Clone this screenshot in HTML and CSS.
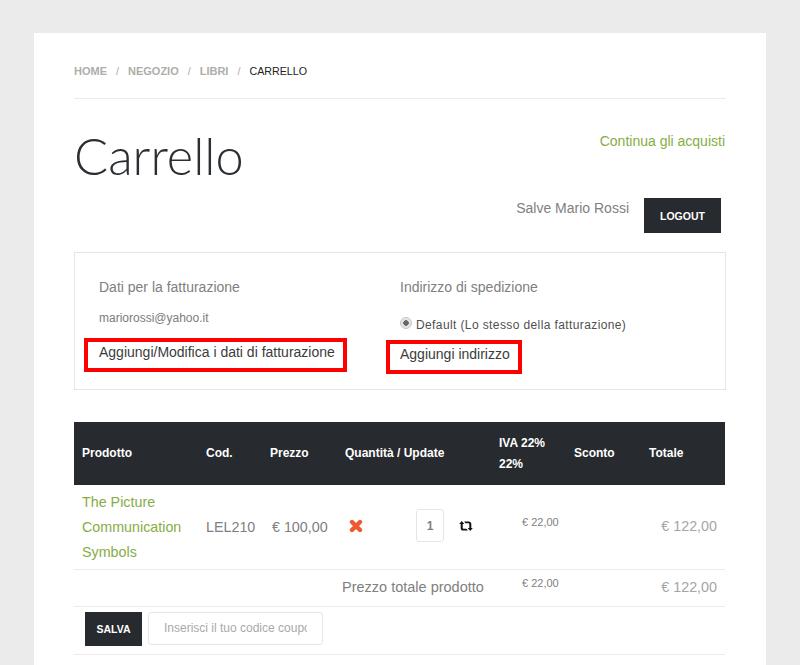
FILE: index.html
```html
<!DOCTYPE html>
<html lang="it">
<head>
<meta charset="utf-8">
<title>Carrello</title>
<link rel="stylesheet" href="styles.css">
</head>
<body>
<main class="card">
  <nav class="crumbs">
    <a>HOME</a><span class="sep">/</span><a>NEGOZIO</a><span class="sep">/</span><a>LIBRI</a><span class="sep">/</span><span class="current">CARRELLO</span>
  </nav>
  <header class="head">
    <h1>Carrello</h1>
    <a class="continue">Continua gli acquisti</a>
  </header>
  <div class="user">
    <span class="hello">Salve Mario Rossi</span>
    <button class="btn logout">LOGOUT</button>
  </div>
  <section class="addresses">
    <div class="col">
      <h2>Dati per la fatturazione</h2>
      <p class="mail">mariorossi@yahoo.it</p>
      <a class="marked wide">Aggiungi/Modifica i dati di fatturazione</a>
    </div>
    <div class="col">
      <h2>Indirizzo di spedizione</h2>
      <label class="radio"><input type="radio" checked> Default (Lo stesso della fatturazione)</label>
      <a class="marked">Aggiungi indirizzo</a>
    </div>
  </section>
  <table class="cart">
    <colgroup>
      <col class="c1"><col class="c2"><col class="c3"><col class="c4"><col class="c5"><col class="c6"><col class="c7">
    </colgroup>
    <thead>
      <tr>
        <th>Prodotto</th><th>Cod.</th><th>Prezzo</th><th>Quantità / Update</th><th>IVA 22%<br>22%</th><th>Sconto</th><th>Totale</th>
      </tr>
    </thead>
    <tbody>
      <tr class="item">
        <td><a class="product">The Picture Communication Symbols</a></td>
        <td class="shift">LEL210</td>
        <td class="shift nowrap price">€ 100,00</td>
        <td>
          <div class="qty">
            <svg class="remove" viewBox="0 0 14 14" width="14" height="14" aria-hidden="true"><path d="M3 3 11 11M11 3 3 11"/></svg>
            <input class="qty-input" type="text" value="1">
            <svg class="update" viewBox="0 0 14 12" width="14" height="12" aria-hidden="true"><path d="M2.8 1 0.2 4H1.7V8C1.7 9.7 2.6 10.6 4.3 10.6H9L7.4 8.7H4.6C4 8.7 3.7 8.4 3.7 7.8V4H5.3ZM5 1.4 6.6 3.3H9.4C10 3.3 10.3 3.6 10.3 4.2V8H8.7L11.2 11 13.8 8H12.3V4C12.3 2.3 11.4 1.4 9.7 1.4Z"/></svg>
          </div>
        </td>
        <td class="tax"><span>€ 22,00</span></td>
        <td></td>
        <td class="total">€ 122,00</td>
      </tr>
      <tr class="sum">
        <td colspan="4" class="sum-label">Prezzo totale prodotto</td>
        <td class="tax"><span>€ 22,00</span></td>
        <td></td>
        <td class="total">€ 122,00</td>
      </tr>
      <tr class="coupon">
        <td colspan="7">
          <div class="coupon-row">
            <button class="btn save">SALVA</button>
            <input class="code" type="text" placeholder="Inserisci il tuo codice coupon">
          </div>
        </td>
      </tr>
    </tbody>
  </table>
</main>
</body>
</html>
```

FILE: styles.css
```css
* { box-sizing: border-box; }
html, body { height: 100%; overflow: hidden; }
body {
  margin: 0;
  padding: 33px 34px 0;
  background: #ebebeb;
  font-family: "Liberation Sans", Arial, sans-serif;
  color: #808080;
}
.card {
  background: #fff;
  padding: 32px 40px 0;
  height: 632px;
  overflow: hidden;
}
.crumbs {
  display: flex;
  align-items: center;
  box-sizing: content-box;
  height: 12px;
  padding-bottom: 21px;
  border-bottom: 1px solid #ebebeb;
  font-size: 10.7px;
  color: #a09f9c;
}
.crumbs a { font-size: 11px; font-weight: 700; opacity: .85; }
.sep { margin: 0 9px; color: #a9a9a9; }
.current { color: #222; }
.head {
  display: flex;
  justify-content: space-between;
  align-items: flex-start;
  padding-top: 24px;
}
h1 {
  margin: 0;
  font-family: "Lato", sans-serif;
  font-weight: 300;
  font-size: 50.5px;
  line-height: 66px;
  color: #2b2e33;
}
.continue {
  margin-top: 9px;
  margin-right: 1px;
  font-size: 14px;
  line-height: 18px;
  color: #86ad45;
}
.user {
  display: flex;
  justify-content: flex-end;
  align-items: flex-start;
  gap: 15px;
  padding-right: 5px;
  margin-top: 9px;
}
.hello { font-size: 14px; line-height: 18px; margin-top: 1px; }
.btn {
  border: 0;
  background: #272a2e;
  color: #fff;
  font-family: "Liberation Sans", Arial, sans-serif;
  font-weight: 700;
  font-size: 10.5px;
}
.logout { width: 77px; height: 35px; }
.addresses {
  display: grid;
  grid-template-columns: 301px 301px;
  height: 138px;
  margin-top: 19px;
  padding: 25px 0 0 24px;
  border: 1px solid #e6e6e6;
}
.col { display: flex; flex-direction: column; align-items: flex-start; }
h2 { margin: 0; font-size: 14px; font-weight: 400; line-height: 18px; color: #808080; }
.mail { margin: 14px 0 0; font-size: 12px; line-height: 16px; height: 28px; color: #7c7c7c; }
.radio {
  display: flex;
  align-items: center;
  gap: 4px;
  margin-top: 18px;
  height: 21px;
  margin-bottom: 5px;
  font-size: 12px;
  letter-spacing: .39px;
  color: #4f4f4f;
}
.radio input {
  appearance: none;
  width: 12px;
  height: 12px;
  margin: 0 0 3px;
  border-radius: 50%;
  border: 1px solid #c4c4c4;
  background: radial-gradient(circle, #666 0 2.5px, #e4e4e4 3px);
}
.marked {
  display: block;
  height: 34px;
  margin-left: -15px;
  padding: 0 8px 0 11px;
  border: 4px solid #f00;
  font-size: 14px;
  line-height: 20px;
  color: #3c3c3c;
  white-space: nowrap;
}
.col + .col .marked { margin-left: -14px; padding-left: 10px; padding-right: 8px; }
.cart {
  width: 651px;
  margin-top: 32px;
  border-collapse: collapse;
  table-layout: fixed;
}
.c1 { width: 124px; } .c2 { width: 64px; } .c3 { width: 75px; } .c4 { width: 154px; }
.c5 { width: 75px; } .c6 { width: 75px; } .c7 { width: 84px; }
.cart th {
  height: 63px;
  padding: 0 8px;
  background: #272a2e;
  color: #fff;
  font-size: 12px;
  font-weight: 700;
  line-height: 21px;
  text-align: left;
}
.cart td {
  padding: 0 8px;
  border-bottom: 1px solid #ebebeb;
  font-size: 14.3px;
  line-height: 25px;
  color: #808080;
}
.item td { height: 84px; }
.product { display: block; padding-top: 2px; color: #86ad45; }
.cart .shift { padding-top: 2px; }
.nowrap { white-space: nowrap; }
.cart .price { padding-left: 10px; }
.qty { display: flex; align-items: center; }
.remove { margin: -2px 53px 0 4px; }
.remove path { fill: none; stroke: #f0592e; stroke-width: 4.4; stroke-linecap: round; }
.qty-input {
  width: 28px;
  height: 33px;
  padding: 0;
  margin: -2px 15px 0 0;
  border: 1px solid #e6e6e6;
  border-radius: 3px;
  text-align: center;
  font-family: "Liberation Sans", Arial, sans-serif;
  font-size: 12px;
  font-weight: 700;
  color: #808080;
}
.update { margin-top: -2px; }
.update path { fill: #111; }
.cart .tax { padding-left: 31px; }
.tax span { display: block; margin-top: -10px; font-size: 11px; line-height: 14px; white-space: nowrap; }
.cart .total { text-align: right; color: #a5a5a5; white-space: nowrap; }
.sum td { height: 37px; }
.cart .sum-label { padding-left: 268px; font-size: 14.5px; white-space: nowrap; }
.cart .coupon td { height: 48px; padding: 0 0 0 11px; }
.coupon-row { display: flex; align-items: flex-start; gap: 6px; margin-top: -3px; }
.save { width: 57px; height: 34px; }
.code {
  width: 175px;
  height: 33px;
  padding: 0 15px;
  border: 1px solid #e6e6e6;
  border-radius: 3px;
  font-family: "Liberation Sans", Arial, sans-serif;
  font-size: 12px;
}
.code::placeholder { color: #a9a9a9; opacity: 1; }
```
